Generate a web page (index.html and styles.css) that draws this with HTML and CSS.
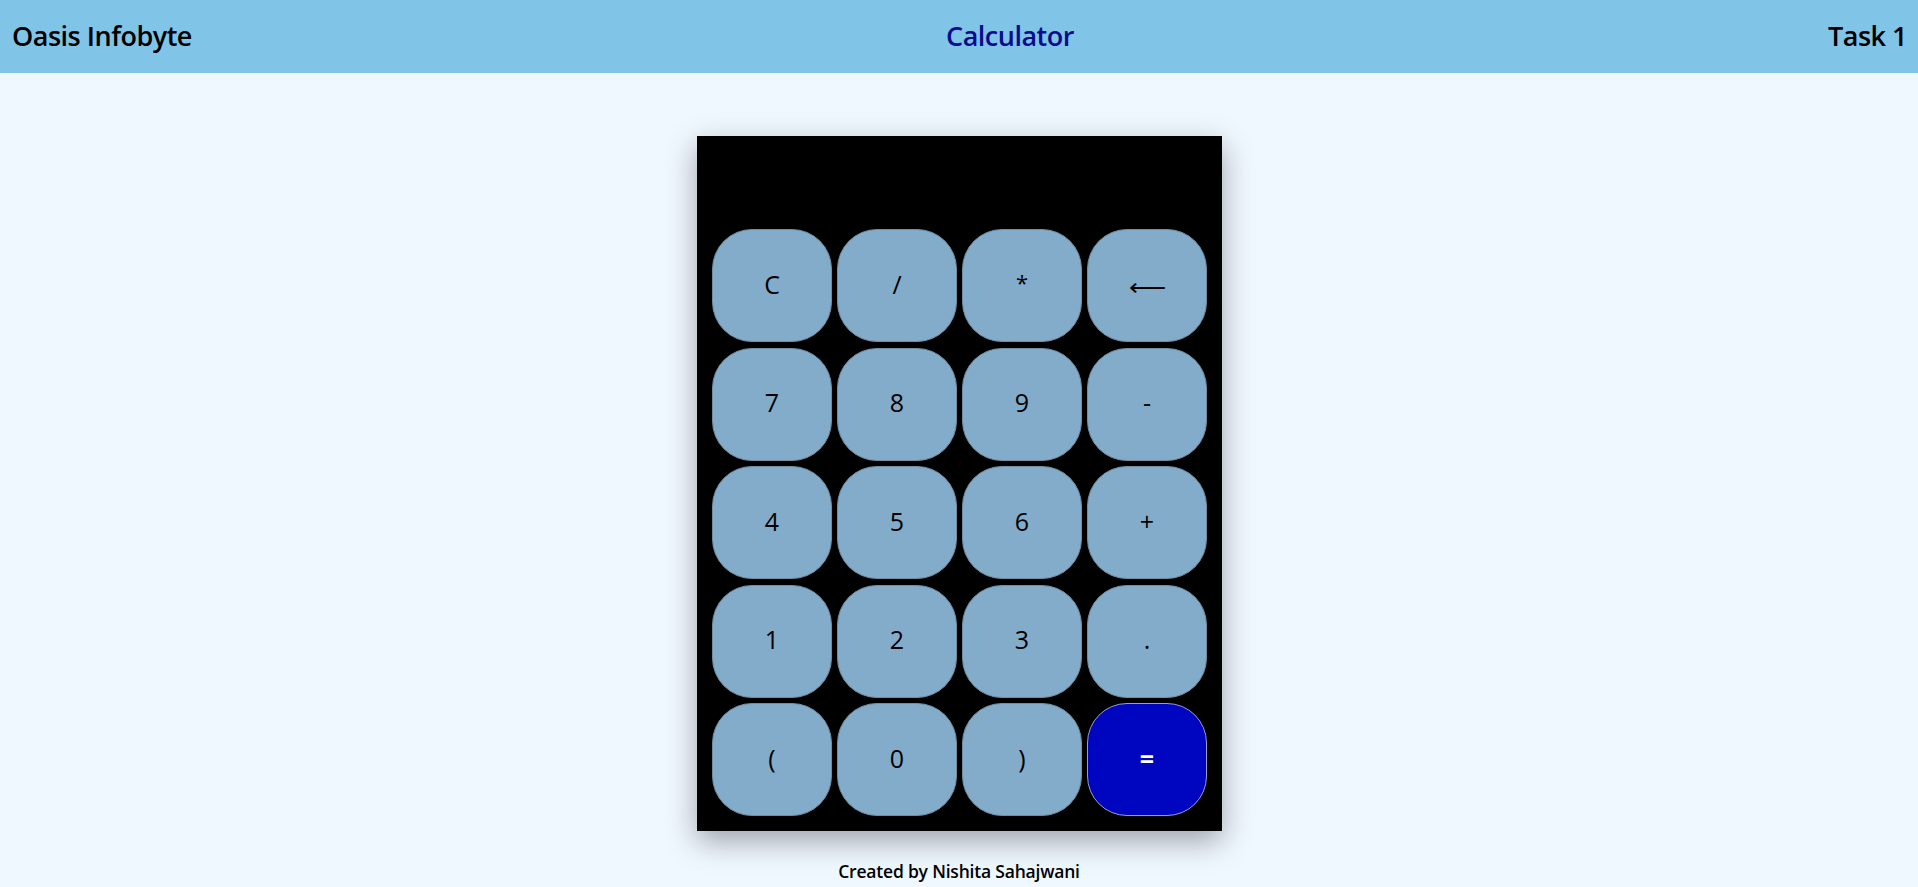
FILE: index.html
```html
<!DOCTYPE html>
<html>
<head>
<meta charset="utf-8">
<title>Calculator</title>
<link rel="stylesheet" href="styles.css">
</head>
<body>
<header class="topbar">
  <div class="brand">Oasis Infobyte</div>
  <div class="title">Calculator</div>
  <div class="task">Task 1</div>
</header>
<main class="main">
  <div class="calc">
    <div class="display"></div>
    <div class="keys">
      <button class="key">C</button>
      <button class="key">/</button>
      <button class="key star">*</button>
      <button class="key arrow">&#x27F5;</button>
      <button class="key">7</button>
      <button class="key">8</button>
      <button class="key">9</button>
      <button class="key">-</button>
      <button class="key">4</button>
      <button class="key">5</button>
      <button class="key">6</button>
      <button class="key">+</button>
      <button class="key">1</button>
      <button class="key">2</button>
      <button class="key">3</button>
      <button class="key">.</button>
      <button class="key">(</button>
      <button class="key">0</button>
      <button class="key">)</button>
      <button class="key equals">=</button>
    </div>
  </div>
  <footer class="credit">Created by Nishita Sahajwani</footer>
</main>
</body>
</html>
```
FILE: styles.css
```css
html, body {
  margin: 0;
  padding: 0;
}
body {
  background: #f0f8ff;
  font-family: "Open Sans", "Noto Sans", sans-serif;
  color: #000;
}
.topbar {
  height: 73px;
  background: #80c4e8;
  display: flex;
  align-items: center;
  justify-content: space-between;
  padding: 0 11px 3px 12px;
  box-sizing: border-box;
  font-size: 27px;
  font-weight: 600;
  letter-spacing: -0.5px;
}
.title {
  color: #0b0b8c;
}
.main {
  display: flex;
  flex-direction: column;
  align-items: center;
  padding-top: 63px;
}
.calc {
  width: 525px;
  height: 695px;
  box-sizing: border-box;
  background: #000;
  box-shadow: 0 10px 28px rgba(0, 0, 0, 0.35);
  padding: 0 15px 15px;
  display: flex;
  flex-direction: column;
  margin-left: 1px;
}
.display {
  height: 93px;
  flex: none;
}
.keys {
  display: grid;
  grid-template-columns: repeat(4, 120px);
  grid-auto-rows: 113px;
  column-gap: 5px;
  row-gap: 5.5px;
}
.key {
  background: #82acca;
  border: 1px solid #6f8ea3;
  border-radius: 40px;
  font-family: "Open Sans", "Noto Sans", sans-serif;
  font-size: 25px;
  color: #000;
  padding: 0 0 4px;
  margin: 0;
}
.key.star {
  font-size: 22px;
  padding-bottom: 8px;
}
.key.arrow {
  font-family: "DejaVu Sans", sans-serif;
  font-size: 26px;
  font-weight: 300;
  padding: 2px 0 0;
}
.equals {
  background: #0005c0;
  border-color: #9a9ad8;
  color: #fff;
  font-weight: 700;
}
.credit {
  margin-top: 28px;
  font-size: 17.5px;
  font-weight: 600;
  letter-spacing: -0.2px;
}
```
